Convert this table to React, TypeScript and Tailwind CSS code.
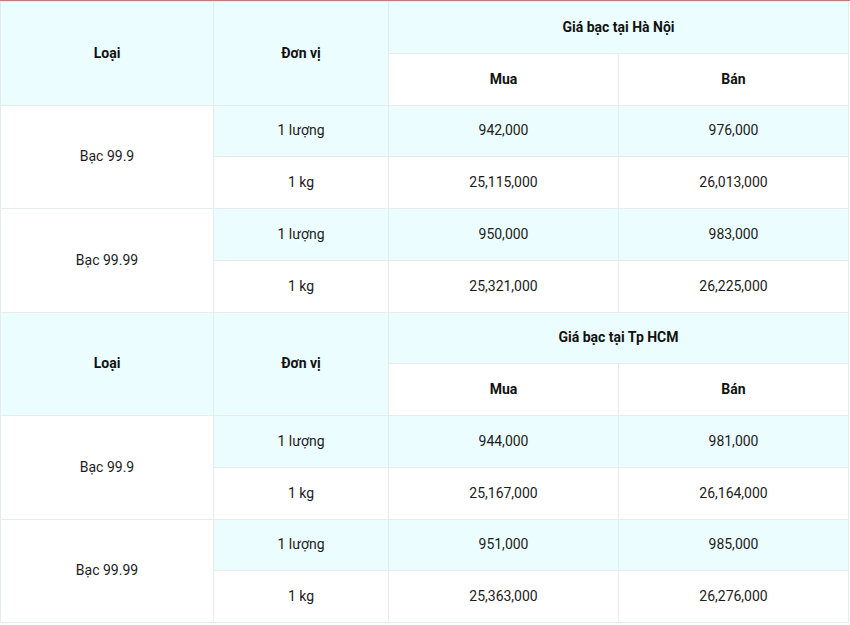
import React from 'react';

type Row = { loai: string; donvi: string; mua: string; ban: string };

const sections: { title: string; rows: Row[] }[] = [
  {
    title: 'Giá bạc tại Hà Nội',
    rows: [
      { loai: 'Bạc 99.9', donvi: '1 lượng', mua: '942,000', ban: '976,000' },
      { loai: 'Bạc 99.9', donvi: '1 kg', mua: '25,115,000', ban: '26,013,000' },
      { loai: 'Bạc 99.99', donvi: '1 lượng', mua: '950,000', ban: '983,000' },
      { loai: 'Bạc 99.99', donvi: '1 kg', mua: '25,321,000', ban: '26,225,000' },
    ],
  },
  {
    title: 'Giá bạc tại Tp HCM',
    rows: [
      { loai: 'Bạc 99.9', donvi: '1 lượng', mua: '944,000', ban: '981,000' },
      { loai: 'Bạc 99.9', donvi: '1 kg', mua: '25,167,000', ban: '26,164,000' },
      { loai: 'Bạc 99.99', donvi: '1 lượng', mua: '951,000', ban: '985,000' },
      { loai: 'Bạc 99.99', donvi: '1 kg', mua: '25,363,000', ban: '26,276,000' },
    ],
  },
];

const cell = 'border border-[#e6ecec] text-center align-middle h-[51.75px] p-0';

export default function App() {
  return (
    <div className="w-[850px] h-[625px] bg-white" style={{ fontFamily: 'Roboto, "Noto Sans", sans-serif' }}>
      <div className="h-[1px] bg-[#c07c78]" />
      <table className="border-collapse table-fixed w-[848px] text-[14px] text-[#1c1c1c]">
        <colgroup>
          <col className="w-[213px]" />
          <col className="w-[175px]" />
          <col className="w-[230px]" />
          <col className="w-[230px]" />
        </colgroup>
        {sections.map((s) => (
          <tbody key={s.title}>
            <tr className="bg-[#ebfdfe] font-bold text-[#111]">
              <td rowSpan={2} className={cell}>Loại</td>
              <td rowSpan={2} className={cell}>Đơn vị</td>
              <td colSpan={2} className={cell}>{s.title}</td>
            </tr>
            <tr className="font-bold text-[#111]">
              <td className={`${cell} bg-white`}>Mua</td>
              <td className={`${cell} bg-white`}>Bán</td>
            </tr>
            {s.rows.map((r, i) => {
              const tint = i % 2 === 0 ? 'bg-[#ebfdfe]' : 'bg-white';
              return (
                <tr key={i}>
                  {i % 2 === 0 && (
                    <td rowSpan={2} className={`${cell} bg-white`}>{r.loai}</td>
                  )}
                  <td className={`${cell} ${tint}`}>{r.donvi}</td>
                  <td className={`${cell} ${tint}`}>{r.mua}</td>
                  <td className={`${cell} ${tint}`}>{r.ban}</td>
                </tr>
              );
            })}
          </tbody>
        ))}
      </table>
    </div>
  );
}
